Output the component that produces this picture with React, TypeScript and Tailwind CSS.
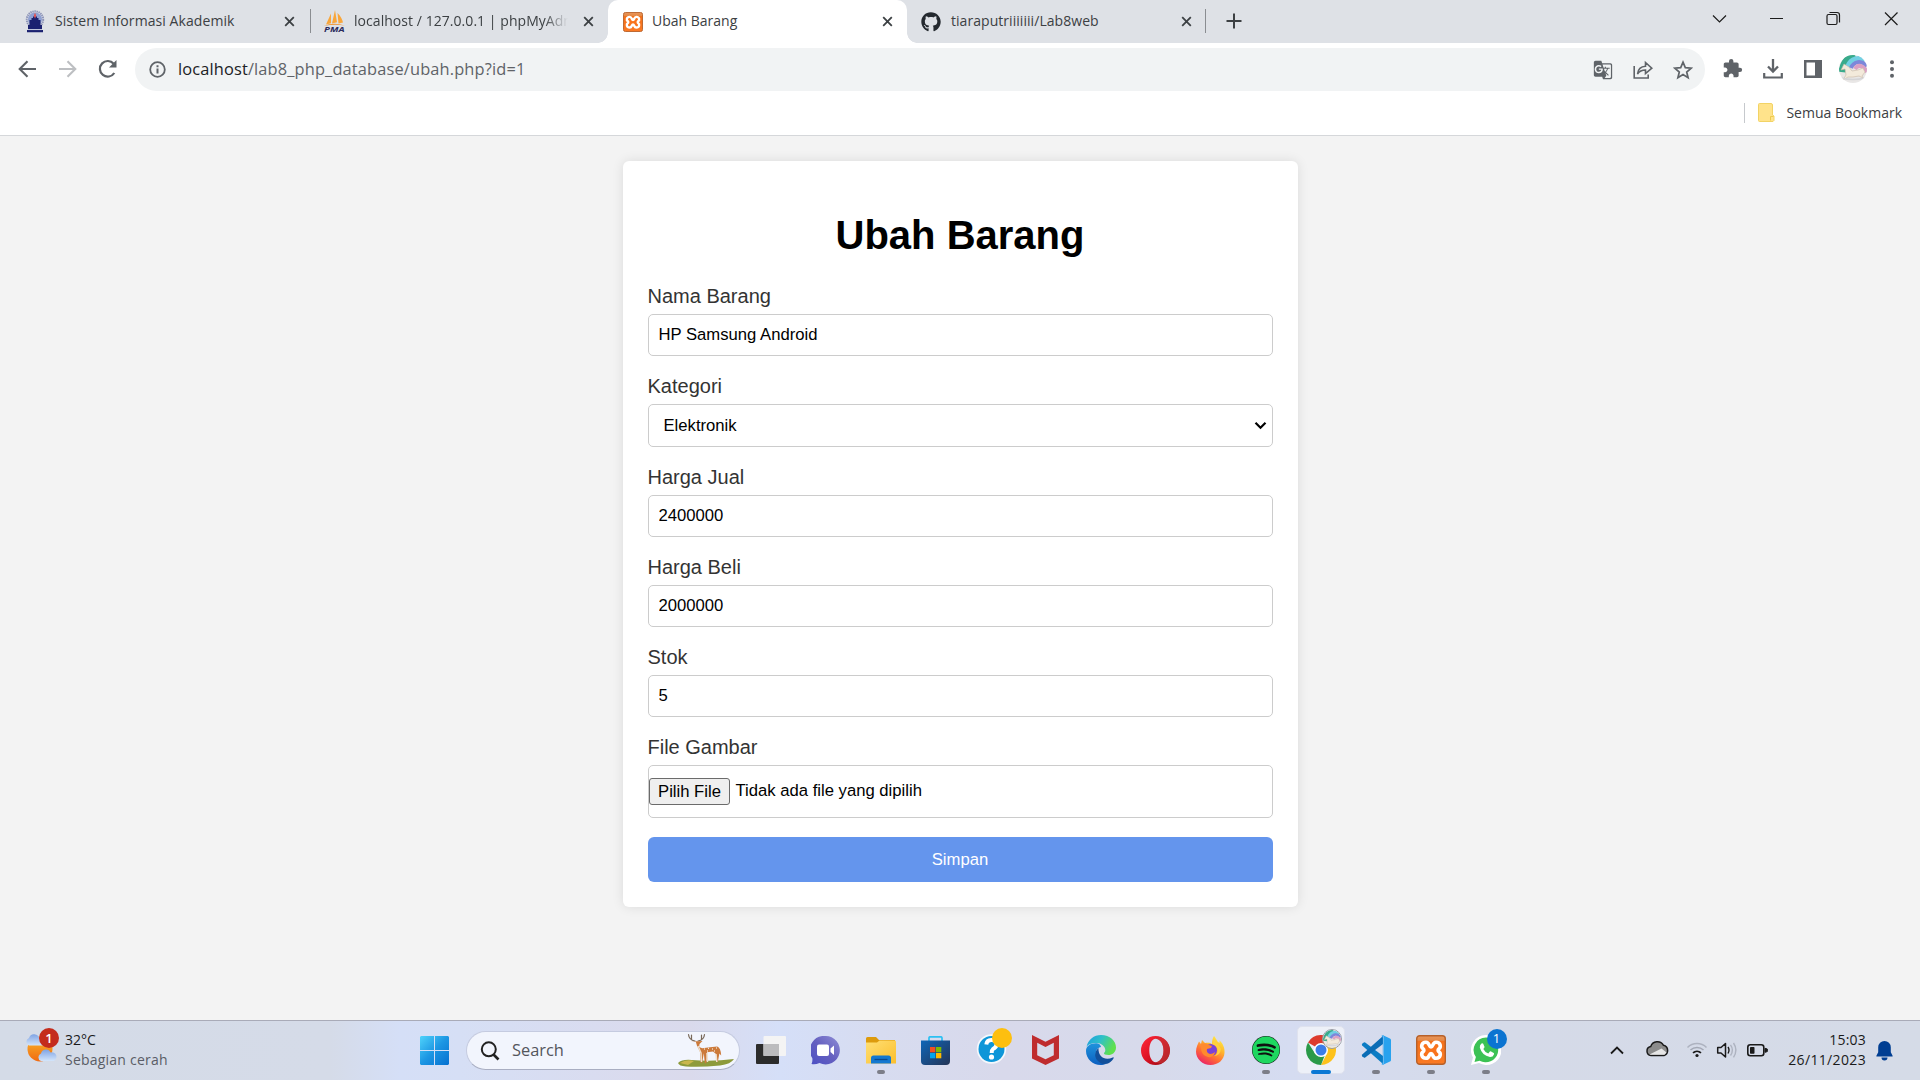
import React from "react";
import { FaGithub, FaSpotify } from "react-icons/fa";
import { MdExtension, MdGTranslate } from "react-icons/md";

const SEGOE = "font-['Open_Sans',sans-serif]";

function CloseX() {
  return (
    <svg width="11" height="11" viewBox="0 0 11 11" className="shrink-0">
      <path d="M1.200 1.200L9.800 9.800M9.800 1.200L1.200 9.800" stroke="#3c4043" strokeWidth="1.800" />
    </svg>
  );
}

function CampusIcon() {
  return (
    <svg width="20" height="23" viewBox="0 0 20 23">
      <circle cx="10" cy="9.500" r="8.200" fill="none" stroke="#8d94b8" strokeWidth="2" strokeDasharray="1.4 .7" />
      <circle cx="10" cy="9.500" r="7" fill="#8fa0d2" />
      <path d="M4.500 10h2V8H8V6.500h4V8h1.500v2h2v5.500h-11z" fill="#1b2170" />
      <path d="M2 20h16v2.300H2zM3 15h14v4.300H3z" fill="#1b2170" />
      <path d="M10 2.500l1.200 3.300-1.200 3-1.200-3z" fill="#e25353" />
      <path d="M3 19.600h14" stroke="#cdd1e6" strokeWidth=".7" />
    </svg>
  );
}

function PmaIcon() {
  return (
    <svg width="21" height="23" viewBox="0 0 21 23" className="shrink-0">
      <path d="M7 3.500L2 14.500l5-1.200zM11 0L8 13.500l5-1.200zM13.500 3c3 3 5 6.500 5.500 9.500l-4.500 1z" fill="#f9a63a" />
      <path d="M0 16Q9 12 21 15.500 10 13.600 0 16z" fill="#f0932b" />
      <text x="0" y="22.400" fontSize="7.600" fontWeight="bold" fontStyle="italic" fontFamily="Open Sans" textLength="20.500" lengthAdjust="spacingAndGlyphs" fill="#2b2b5c">PMA</text>
    </svg>
  );
}

function Xampp({ size }: { size: number }) {
  return (
    <svg width={size} height={size} viewBox="0 0 30 30">
      <defs>
        <linearGradient id="xg" x1="0" y1="0" x2="0" y2="1">
          <stop offset="0" stopColor="#e8955a" />
          <stop offset=".16" stopColor="#e58a48" />
          <stop offset=".2" stopColor="#f3701a" />
          <stop offset="1" stopColor="#fb7a24" />
        </linearGradient>
      </defs>
      <rect x=".7" y=".7" width="28.600" height="28.600" rx="3" fill="url(#xg)" stroke="#b7612a" strokeWidth="1.400" />
      <path d="M15 12C17.300 12 16.300 7.300 20 7.300C24.800 7.300 25.300 12.300 22.700 14C21.900 14.600 21.900 16 22.700 16.600C25.300 18.300 24.800 23.300 20 23.300C16.300 23.300 17.300 18.600 15 18.600C12.700 18.600 13.700 23.300 10 23.300C5.200 23.300 4.700 18.300 7.300 16.600C8.100 16 8.100 14.600 7.300 14C4.700 12.300 5.200 7.300 10 7.300C13.700 7.300 12.700 12 15 12z" fill="#f9731c" stroke="#fff" strokeWidth="3.600" strokeLinejoin="round" />
    </svg>
  );
}

function Unicorn({ size }: { size: number }) {
  return (
    <svg width={size} height={size} viewBox="0 0 28 28">
      <defs><clipPath id="uc"><circle cx="14" cy="14" r="14" /></clipPath></defs>
      <g clipPath="url(#uc)">
        <rect width="28" height="28" fill="#e9e7e6" />
        <path d="M3 17C4 8 8 3 16 0" stroke="#39ab8b" strokeWidth="7" fill="none" />
        <path d="M8 14C10 6 16 1 26 5" stroke="#72d0e3" strokeWidth="5" fill="none" />
        <path d="M12 13C15 6 22 5 28 11" stroke="#7d87da" strokeWidth="4" fill="none" />
        <path d="M16 14C19 9 24 10 28 17" stroke="#dba0c4" strokeWidth="4" fill="none" />
        <path d="M5 9l5 3 3 4 6-1 5-2 2 4-3 4 1 2-4-2-6 1-5 0-5 3 3-5-1-6-4 1z" fill="#f3eadb" stroke="#c9b9a4" strokeWidth=".6" />
        <path d="M2 23q12 3 24 0" stroke="#d4d4d6" strokeWidth="1.500" fill="none" />
      </g>
    </svg>
  );
}

function TabStrip() {
  return (
    <div className="relative flex h-[43px] bg-[#dee1e6] text-[14px] text-[#3c4043]">
      <div className="flex w-[310px] items-center pr-[15px] pl-[25px]">
        <CampusIcon />
        <span className="-mt-[2px] ml-[10px] flex-1 tracking-[0.080px] whitespace-nowrap">Sistem Informasi Akademik</span>
        <CloseX />
      </div>
      <div className="mt-[9px] h-6 w-px bg-[#8a8d91]" />
      <div className="flex w-[297px] items-center pr-[14px] pl-[13px]">
        <PmaIcon />
        <span className="-mt-[2px] ml-[9px] w-[214px] overflow-hidden tracking-[0.050px] whitespace-nowrap [mask-image:linear-gradient(to_right,#000_190px,transparent_214px)]">localhost / 127.0.0.1 | phpMyAdmin</span>
        <span className="flex-1" />
        <CloseX />
      </div>
      <div className="relative flex w-[299px] items-center rounded-t-[10px] bg-white pr-[14px] pl-[15px]">
        <div className="absolute bottom-0 -left-[10px] h-[10px] w-[10px] bg-[radial-gradient(circle_at_0_0,transparent_9.500px,#fff_10px)]" />
        <div className="absolute -right-[10px] bottom-0 h-[10px] w-[10px] bg-[radial-gradient(circle_at_100%_0,transparent_9.500px,#fff_10px)]" />
        <Xampp size={20} />
        <span className="-mt-[2px] ml-[9px] flex-1">Ubah Barang</span>
        <CloseX />
      </div>
      <div className="flex w-[298px] items-center pr-[13px] pl-[14px]">
        <FaGithub size={20} color="#24292f" />
        <span className="-mt-[2px] ml-[10px] flex-1 tracking-[0.050px]">tiaraputriiiiiii/Lab8web</span>
        <CloseX />
      </div>
      <div className="mt-[9px] h-6 w-px bg-[#8a8d91]" />
      <svg width="16" height="16" viewBox="0 0 16 16" className="mt-[13px] ml-[20px]">
        <path d="M8 .5v15M.5 8h15" stroke="#3c4043" strokeWidth="2" />
      </svg>
      <div className="flex-1" />
      <svg width="192" height="24" viewBox="0 0 192 24" className="mt-[6px] mr-[18px] shrink-0" fill="none" stroke="#1c1c1c" strokeWidth="1.200">
        <path d="M3 9.500l6.500 6.500L16 9.500M60 12.500h13" />
        <rect x="117" y="8.500" width="10" height="10" rx="1.500" />
        <path d="M119.500 6.500h7.500a2.500 2.500 0 0 1 2.500 2.500v7.500M175 6.500l12.500 12.500M187.500 6.500l-12.500 12.500" />
      </svg>
    </div>
  );
}

function Toolbar() {
  return (
    <div className="flex h-[48px] items-end">
      <div className="flex h-[43px] w-[135px] items-center pl-[18px]">
        <svg width="19" height="18" viewBox="0 0 19 18" fill="none" stroke="#5f6368" strokeWidth="2.100" className="-mt-[2px]">
          <path d="M18 9H2M9.500 1.200L1.700 9l7.800 7.800" />
        </svg>
        <svg width="19" height="18" viewBox="0 0 19 18" fill="none" stroke="#bdbfc2" strokeWidth="2.100" className="-mt-[2px] ml-[21px]">
          <path d="M1 9h16M9.500 1.200L17.300 9l-7.800 7.800" />
        </svg>
        <svg width="20" height="20" viewBox="0 0 20 20" fill="none" className="-mt-[1px] ml-[21px]">
          <path d="M16.300 14A7.800 7.800 0 1 1 15.700 4.800" stroke="#5f6368" strokeWidth="2.200" />
          <path d="M18.500 1v7.500H11z" fill="#5f6368" />
        </svg>
      </div>
      <div className="flex h-[43px] w-[1570px] items-center rounded-full bg-[#f1f3f4] pl-[14px] text-[16.400px] text-[#5f6368]">
        <svg width="17" height="17" viewBox="0 0 17 17" fill="none" stroke="#5f6368">
          <circle cx="8.500" cy="8.500" r="7.300" strokeWidth="1.800" />
          <path d="M8.500 7.500v5M8.500 4.200v2" strokeWidth="2" />
        </svg>
        <span className="ml-[12px] flex-1 tracking-[0.140px]"><span className="text-[#202124]">localhost</span>/lab8_php_database/ubah.php?id=1</span>
        <MdGTranslate size={20} />
        <svg width="20" height="20" viewBox="0 0 20 20" fill="none" stroke="#5f6368" strokeWidth="1.600" className="ml-[20px]">
          <path d="M1.200 6v12h14v-3.500" />
          <path d="M4.500 14C5 9.500 8 6.500 12.500 6.300V2.500l6.300 5.700-6.300 5.300V10C9 10 6.500 11 4.500 14z" />
        </svg>
        <svg width="20" height="20" viewBox="0 0 20 20" fill="none" stroke="#5f6368" strokeWidth="1.700" className="mr-[12px] ml-[20px]">
          <path d="M10 2.200l2.300 5.400 5.900.5-4.500 3.900 1.400 5.700L10 14.600l-5.100 3.100 1.400-5.700L1.800 8.100l5.900-.5z" />
        </svg>
      </div>
      <div className="flex h-[43px] flex-1 items-center pl-[17px]">
        <MdExtension size={21} color="#5f6368" className="-mt-[2px]" />
        <svg width="20" height="20" viewBox="0 0 20 20" fill="none" stroke="#5f6368" className="-mt-[2px] ml-[20px]">
          <path d="M10 0v12M5 7.500l5 5 5-5" strokeWidth="2.300" />
          <path d="M1.200 14v4.500h17.600V14" strokeWidth="2.200" />
        </svg>
        <svg width="18" height="18" viewBox="0 0 18 18" className="-mt-[2px] ml-[21px]">
          <path d="M0 0h18v18H0zM2.500 2.500v13H11v-13z" fill="#5f6368" fillRule="evenodd" />
        </svg>
        <div className="-mt-[1px] ml-[17px]"><Unicorn size={28} /></div>
        <svg width="4" height="18" viewBox="0 0 4 18" className="-mt-[1px] ml-[23px]" fill="#5f6368">
          <circle cx="2" cy="2.200" r="2" /><circle cx="2" cy="9" r="2" /><circle cx="2" cy="15.800" r="2" />
        </svg>
      </div>
    </div>
  );
}

function Bookmarks() {
  return (
    <div className="flex h-[45px] items-start justify-end border-b border-[#d5d7da] pr-[18px] text-[14px] text-[#3c4043]">
      <div className="mt-[12px] h-5 w-px bg-[#c6c9cd]" />
      <svg width="17" height="19" viewBox="0 0 17 19" className="mt-[12px] ml-[13px]">
        <path d="M1.500.5h11.500a1.500 1.500 0 0 1 1.500 1.500v10l1.500 1v4.500l-1 1H1.500a1 1 0 0 1-1-1V1.500a1 1 0 0 1 1-1z" fill="#ffe38b" stroke="#f2d365" />
        <path d="M12.500 17.500v-4h3" fill="none" stroke="#efca4c" />
      </svg>
      <span className="mt-[11px] ml-[11px]">Semua Bookmark</span>
    </div>
  );
}

const field = "block w-full rounded-[5px] border border-[#ccc] bg-white text-[16.667px] text-black";

function Field({ label, children }: { label: string; children: React.ReactNode }) {
  return (
    <div className="h-[90.250px]">
      <label className="mb-[6px] block h-[24px] text-[20px] leading-[24px] text-[#333]">{label}</label>
      {children}
    </div>
  );
}

function FormCard() {
  return (
    <main className="flex h-[884px] justify-center bg-[#f3f3f3] pt-[25px] font-['Liberation_Sans',Arial,sans-serif]">
      <form className="h-[746px] w-[675px] rounded-[6px] bg-white px-[25px] shadow-[0_0_12px_rgba(0,0,0,0.1)]">
        <h1 className="mt-[51px] mb-[26px] h-[46px] text-center text-[40px] leading-[46px] font-bold text-black">Ubah Barang</h1>
        <Field label="Nama Barang"><input className={field + " h-[42px] px-[10px]"} defaultValue="HP Samsung Android" /></Field>
        <Field label="Kategori">
          <div className={field + " flex h-[43px] items-center justify-between pr-[5px] pl-[15px]"}>
            <span>Elektronik</span>
            <svg width="13" height="9" viewBox="0 0 13 9" fill="none" stroke="#000" strokeWidth="2.200"><path d="M1.500 1.700l5 5 5-5" /></svg>
          </div>
        </Field>
        <Field label="Harga Jual"><input className={field + " h-[42px] px-[10px]"} defaultValue="2400000" /></Field>
        <Field label="Harga Beli"><input className={field + " h-[42px] px-[10px]"} defaultValue="2000000" /></Field>
        <Field label="Stok"><input className={field + " h-[42px] px-[10px]"} defaultValue="5" /></Field>
        <Field label="File Gambar">
          <div className={field + " flex h-[53px] items-start pt-[12px]"}>
            <button type="button" className="h-[27px] w-[81px] rounded-[3px] border border-[#6b6b6b] bg-[#efefef] pl-px leading-[25px] whitespace-nowrap">Pilih File</button>
            <span className="ml-[6px] leading-[25px]">Tidak ada file yang dipilih</span>
          </div>
        </Field>
        <button type="button" className="mt-[11px] block h-[45px] w-full rounded-[6px] bg-[#6495ed] text-[16.667px] text-white">Simpan</button>
      </form>
    </main>
  );
}

function Cell({ children, dot, active }: { children: React.ReactNode; dot?: boolean; active?: boolean }) {
  return (
    <div className="relative flex h-[58px] w-[55px] shrink-0 items-center justify-center">
      {active && <div className="absolute top-[5px] left-[3.500px] h-[48px] w-[48px] rounded-[5px] border border-[#dfe2ee] bg-[#edf0f8]" />}
      <div className="relative">{children}</div>
      {dot && <div className="absolute bottom-[5px] h-[4px] w-[8px] rounded-full bg-[#7c7e88]" />}
      {active && <div className="absolute bottom-[5px] h-[4px] w-[20px] rounded-full bg-[#0b78d4]" />}
    </div>
  );
}

function StartIcon() {
  return (
    <svg width="29" height="29" viewBox="0 0 29 29" className="block">
      <defs><linearGradient id="wg" x1="0" y1="0" x2="1" y2="1"><stop offset="0" stopColor="#4fd3fb" /><stop offset=".5" stopColor="#1c96e3" /><stop offset="1" stopColor="#0570d0" /></linearGradient></defs>
      <path d="M1 0h13v14H0V1zM15 0h13l1 1v13H15zM0 15h14v14H1l-1-1zM15 15h14v13l-1 1H15z" fill="url(#wg)" />
    </svg>
  );
}

function Deer() {
  return (
    <svg width="56" height="34" viewBox="0 0 56 34" className="-mt-px">
      <path d="M0 30Q4 26 14 27q20 2 42-1-3 5-14 6.500-20 2-34 1Q1 33 0 30z" fill="#8d9a3b" />
      <path d="M2 30q6-4 14-2l-6 4z" fill="#c9b64d" />
      <path d="M17 8Q11 7 10.500 1.500M20 8Q26 7 26.500 1.500M13.500 6V2M23.500 6V2" fill="none" stroke="#79695a" strokeWidth="1.200" strokeLinecap="round" />
      <path d="M13 8l4 .3h3.500l4-.3-3 3-.3 3 3 1.300q8-1.300 15-1.800 3.500 1 4 9l-1.800-2-1.600 8.500h-1.300l-.5-8-3-2.500-6 .8-.7 11h-1.500l-1-10-1.600 9.500h-1.500l-.7-11-3-6-1.200-4z" fill="#cc7a3b" />
      <path d="M20 13l3 7 .5 9M29 20l.5 9M38 21l.8 8" stroke="#efdfcc" strokeWidth="1.500" fill="none" />
      <path d="M26 16h1M30 15.300h1M34 16h1M38 15h1M29 18h1M36 18h1" stroke="#fff" strokeWidth="1" />
    </svg>
  );
}

function TaskView() {
  return (
    <svg width="30" height="28" viewBox="0 0 30 28" className="block">
      <rect x="0" y="8" width="23" height="20" rx="1" fill="#2c2c2c" />
      <rect x="7.500" y="0" width="22.500" height="20" rx="1" fill="#f4f4f4" />
      <rect x="7.500" y="8" width="15.500" height="12" fill="#bcbcbe" />
    </svg>
  );
}

function Chat() {
  return (
    <svg width="29" height="29" viewBox="0 0 29 29" className="block">
      <defs><linearGradient id="cg" x1="1" y1="0" x2="0" y2="1"><stop offset="0" stopColor="#8f8ed6" /><stop offset=".5" stopColor="#6560c0" /><stop offset="1" stopColor="#4c50c4" /></linearGradient></defs>
      <path d="M14.500 0a14.200 14.200 0 1 1-6 27Q4 29 .5 28q1.300-2.500.8-6A14.200 14.200 0 0 1 14.500 0z" fill="url(#cg)" />
      <rect x="6" y="8.500" width="12" height="11.500" rx="2" fill="#fff" />
      <path d="M19.500 12.500l3.500-3v9.500l-3.500-3z" fill="#fff" />
    </svg>
  );
}

function Explorer() {
  return (
    <svg width="30" height="27" viewBox="0 0 30 27" className="block">
      <defs><linearGradient id="eg" x1="0" y1="0" x2="1" y2="1"><stop offset="0" stopColor="#ffdf74" /><stop offset="1" stopColor="#fbbf2d" /></linearGradient></defs>
      <path d="M0 1.500Q0 0 1.500 0H10l3 3h16v5H0z" fill="#dd9b0c" />
      <path d="M0 5.500h11l2.500-2H29l1 1V26.500H0z" fill="url(#eg)" />
      <path d="M5 26.500V21q0-2.500 2.500-2.500h15Q25 18.500 25 21v5.500z" fill="#1478d0" />
      <path d="M8.500 22.500h13" stroke="#0b4a90" strokeWidth="1.300" />
    </svg>
  );
}

function Store() {
  return (
    <svg width="29" height="29" viewBox="0 0 29 29" className="block">
      <defs><linearGradient id="sg" x1="0" y1="0" x2="1" y2="1"><stop offset="0" stopColor="#0f66b8" /><stop offset="1" stopColor="#243456" /></linearGradient></defs>
      <path d="M8 5V2q0-1.200 1.200-1.200h10.600Q21 .8 21 2v3" fill="none" stroke="#2cc0f2" strokeWidth="1.700" />
      <path d="M0 4.500h29V25q0 4-4 4H4q-4 0-4-4z" fill="url(#sg)" />
      <path d="M9 11h5.300v5.300H9z" fill="#f25022" /><path d="M15 11h5.300v5.300H15z" fill="#7fba00" />
      <path d="M9 17h5.300v5.300H9z" fill="#00a4ef" /><path d="M15 17h5.300v5.300H15z" fill="#ffb900" />
    </svg>
  );
}

function Help() {
  return (
    <svg width="36" height="38" viewBox="0 0 36 38" className="block">
      <circle cx="15.500" cy="21" r="14.700" fill="#f4f8fc" />
      <circle cx="15.500" cy="21" r="13" fill="#0e96d8" />
      <path d="M10.300 16.500q.7-5 5.700-4.500 5 .7 4.500 5-.5 2.500-3.500 4-1.300 1-1.300 4" fill="none" stroke="#fff" strokeWidth="4" />
      <circle cx="15.500" cy="29" r="2.600" fill="#fff" />
      <circle cx="26" cy="10" r="10" fill="#fdbf0f" />
    </svg>
  );
}

function McAfee() {
  return (
    <svg width="27" height="30" viewBox="0 0 27 30" className="block">
      <path d="M0 0l13.500 6.700L27 0v23.500L13.500 30 0 23.500z" fill="#bf2c2e" />
      <path d="M5.200 7.800l8.300 4.200 8.300-4.200v12.400l-8.300 4-8.300-4z" fill="#d7daea" />
    </svg>
  );
}

function Edge() {
  return (
    <svg width="30" height="30" viewBox="0 0 30 30" className="block">
      <defs>
        <linearGradient id="ea" x1="0" y1="0" x2="1" y2=".4"><stop offset="0" stopColor="#1b9de2" /><stop offset=".5" stopColor="#2fc0c8" /><stop offset="1" stopColor="#5fe04d" /></linearGradient>
        <linearGradient id="eb" x1="0" y1="0" x2="0" y2="1"><stop offset="0" stopColor="#1f93dc" /><stop offset="1" stopColor="#0c5fc0" /></linearGradient>
      </defs>
      <path d="M.5 12C2 4.500 8 0 15 0c9 0 15 6 15 12.500 0 5-4 7.500-7.500 7.500-3 0-5-1-4.500-2 1.500-1.500 1.500-3 1-4.500C18 10 14 8 10 8 5 8 1.500 10 .5 12z" fill="url(#ea)" />
      <path d="M12 8.500C5 7.500 0 11 0 16c0 8 7 14 14.500 14 2 0 4-.3 6-1.200C12 27 9 21 10 16.500c.7-2.500 2.500-4 5-4.500-.3-2-1.500-3-3-3.500z" fill="url(#eb)" />
      <path d="M12.500 13C9 16 8 21 11 25c3.500 4.500 9 5 12 3 2.500-1.500 4-3.500 4.700-5 .2-.7-.3-1-1-.6C20 25.500 12 23 12.500 13z" fill="#12509b" />
    </svg>
  );
}

function Opera() {
  return (
    <svg width="29" height="29" viewBox="0 0 29 29" className="block">
      <defs><linearGradient id="og" x1="0" y1="0" x2="1" y2="1"><stop offset="0" stopColor="#ff2b3c" /><stop offset=".45" stopColor="#e01325" /><stop offset="1" stopColor="#8e0710" /></linearGradient></defs>
      <path d="M14.500 0a14.500 14.500 0 1 1 0 29 14.500 14.500 0 0 1 0-29zm0 2.800c-3.500 0-6.200 5-6.200 11.700s2.700 11.700 6.200 11.700c4.500 0 8-5 8-11.700s-3.500-11.700-8-11.700z" fill="url(#og)" fillRule="evenodd" />
      <path d="M14.500 2.800c2-1.500 6-1.800 9 .4a14.500 14.500 0 0 1 0 22.600c-3 2.200-7 1.900-9 .4 4.500 0 8-5 8-11.700s-3.500-11.700-8-11.700z" fill="#c93b3b" fillOpacity=".6" />
    </svg>
  );
}

function Firefox() {
  return (
    <svg width="29" height="30" viewBox="0 0 29 30" className="block">
      <defs><linearGradient id="fg" x1=".8" y1="0" x2=".2" y2="1"><stop offset="0" stopColor="#fff04a" /><stop offset=".35" stopColor="#ffb62c" /><stop offset=".65" stopColor="#ff6a35" /><stop offset="1" stopColor="#e8186f" /></linearGradient></defs>
      <path d="M18 1c1 1 2.500 3.500 3.500 5.500l2 1.500c0-1 .2-2 0-2.500 3 2.500 5.500 7 5 12.500C28 25 22 30 14.500 30 6.500 30 0 24 0 16.500 0 12 2 9 3 6.500L5 9l1-4 3 3c3-.5 5-.5 7 1 0-3 .5-6 2-8z" fill="url(#fg)" />
      <circle cx="14.800" cy="15.200" r="6.200" fill="#7a42d8" />
      <path d="M5 9q4-2 8 1l3 1-1 2-4 1q-1 4 3 5 3 0 5-2-1 6-7 5-7-2-7-9z" fill="#ff8a2e" />
      <path d="M16 9q6 2 5.500 7-.5 4-3.500 5 6 0 7-7Q22 8 18 5z" fill="#ffd13f" />
    </svg>
  );
}

function Chrome() {
  return (
    <svg width="30" height="30" viewBox="0 0 30 30" className="block">
      <path d="M15 15L2.010 7.500A15 15 0 0 1 28 7.500z" fill="#dd3b2e" />
      <path d="M15 8.200h13.400A15 15 0 0 1 15 30l6-11.500z" fill="#fdc21c" />
      <path d="M2.010 7.500L9 18.500l6 3.300 3.500-.8L15 30A15 15 0 0 1 2.010 7.500z" fill="#2a9a48" />
      <circle cx="15" cy="15" r="7" fill="#fff" /><circle cx="15" cy="15" r="5.500" fill="#3b7de8" />
    </svg>
  );
}

function VSCode() {
  return (
    <svg width="30" height="30" viewBox="0 0 30 30" className="block">
      <path d="M1.200 8.700l1.600-1.300q.7-.5 1.400 0L22 21v8L1.200 10.500q-.8-.9 0-1.800z" fill="#0b7cc4" />
      <path d="M1.200 21.300l1.600 1.300q.7.500 1.400 0L22 9V1L1.200 19.500q-.8.900 0 1.800z" fill="#0a6cb5" />
      <path d="M22 .2l7 3.300q1 .5 1 1.500v20q0 1-1 1.500l-7 3.300q.8-.6.800-2V2.200q0-1.400-.8-2z" fill="#28a2ee" />
      <path d="M20.500.7L22.500 0v30l-2-.8L21.800 27V3z" fill="#28a2ee" />
    </svg>
  );
}

function WhatsApp() {
  return (
    <svg width="30" height="30" viewBox="0 0 30 30" className="block">
      <path d="M15 0a15 15 0 1 1-7 28L0 30l2-7.500A15 15 0 0 1 15 0z" fill="#fff" />
      <path d="M15 2.500a12.400 12.400 0 1 1-6.300 23.200L3.500 27l1.400-5A12.400 12.400 0 0 1 15 2.500z" fill="#3cc254" />
      <path d="M10.500 8.500q1-.7 1.700.2l1.300 3q.2.700-1.200 2.200 1.800 3.500 5 4.500l1.600-1.800q.5-.5 1.200-.1l2.600 1.400q.7.400.2 1.600-1 2.700-4 2.500Q11 20.500 8.800 12.500q-.2-2.500 1.700-4z" fill="#fff" />
    </svg>
  );
}

function Weather() {
  return (
    <svg width="34" height="35" viewBox="0 0 34 35" className="mt-[2px]">
      <defs><linearGradient id="sun" x1="0" y1="0" x2="0" y2="1"><stop offset="0" stopColor="#fbb82b" /><stop offset="1" stopColor="#f06a12" /></linearGradient>
        <linearGradient id="cl" x1="0" y1="0" x2="0" y2="1"><stop offset="0" stopColor="#7ea3e4" /><stop offset="1" stopColor="#d3e5fb" /></linearGradient></defs>
      <circle cx="15" cy="21" r="12.500" fill="url(#sun)" />
      <path d="M4 17.500a4 4 0 0 1 0-7.500 5.500 5.500 0 0 1 10-1l4 8.500z" fill="url(#cl)" />
      <path d="M16 33a4 4 0 0 1 0-7.500 5 5 0 0 1 9.500-1 4 4 0 0 1 3 8.500z" fill="url(#cl)" />
      <circle cx="24" cy="10" r="10" fill="#c42b1c" />
      <text x="24" y="15" textAnchor="middle" fontSize="13" fontWeight="600" fontFamily="Open Sans" fill="#fff">1</text>
    </svg>
  );
}

function Tray() {
  return (
    <svg width="160" height="30" viewBox="0 0 160 30" className="block" fill="none">
      <path d="M2 18.500l6-6 6 6" stroke="#1a1a1a" strokeWidth="1.800" />
      <path d="M42 20.500a4.500 4.500 0 0 1-.3-8.900 7 7 0 0 1 12.800-1.300 5.300 5.300 0 0 1 .5 10.200z" fill="#8c8c8c" stroke="#1a1a1a" strokeWidth="1.500" />
      <path d="M40.500 19.500l12-6 5 4-2 2.300H42z" fill="#e6e6e6" />
      <g stroke="#aeb3c0" strokeWidth="1.500"><path d="M78.500 12.500a13.500 13.500 0 0 1 19 0" /><path d="M81.500 15a9.500 9.500 0 0 1 13 0" stroke="#a3a8b5" /></g>
      <path d="M84 17.800a6 6 0 0 1 8 0" stroke="#1a1a1a" strokeWidth="1.700" /><circle cx="88" cy="20.500" r="1.600" fill="#1a1a1a" />
      <path d="M108.700 12.500h3.300l4.500-4v13.500l-4.500-4h-3.300z" stroke="#1a1a1a" strokeWidth="1.500" strokeLinejoin="round" />
      <path d="M119 12q2 3 0 6.500" stroke="#1a1a1a" strokeWidth="1.400" />
      <path d="M121.500 9.800q3.800 5.200 0 10.700M124.500 8q4.800 7 0 14.300" stroke="#aeb3c0" strokeWidth="1.400" />
      <rect x="138.800" y="9.800" width="16" height="11" rx="2.500" stroke="#1a1a1a" strokeWidth="1.600" />
      <rect x="141" y="12" width="4.500" height="6.800" rx=".7" fill="#1a1a1a" /><path d="M156 13.300l2.300.7v2.600l-2.300.7z" fill="#1a1a1a" stroke="#1a1a1a" />
    </svg>
  );
}

function Taskbar() {
  return (
    <footer className="flex h-[60px] items-start border-t border-[#a9abb8] bg-[linear-gradient(90deg,#d4dbe7_0,#d5dbe8_330px,#d5dff7_400px,#d6dff5_460px,#dadbee_640px,#dadaec_690px,#d5dff8_780px,#d7dcf0_880px,#d8d9eb_1000px,#d7daeb_1150px,#d5dcf1_1290px,#d5dae8_1500px,#d5dbe7_100%)]">
      <div className="flex w-[407px] shrink-0 pt-[5px] pl-[25px]">
        <Weather />
        <div className="ml-[6px] text-[14px] leading-[20px] text-[#1a1a1a]">
          <div className="mt-[4px]">32°C</div>
          <div className="tracking-[0.220px] text-[#5a5d66]">Sebagian cerah</div>
        </div>
      </div>
      <Cell><StartIcon /></Cell>
      <div className="mt-[10px] mr-[3px] ml-[4px] flex h-[39px] w-[274px] shrink-0 items-center rounded-full border border-[#c5cbe0] border-b-[#a9aec2] bg-[#f2f5fd] pr-[5px] pl-[13px]">
        <svg width="20" height="20" viewBox="0 0 20 20" fill="none" stroke="#222" strokeWidth="2"><circle cx="8.800" cy="8.300" r="7" /><path d="M13.500 13.500l5 5" strokeWidth="2.600" /></svg>
        <span className="ml-[12px] flex-1 text-[16.400px] text-[#54565c]">Search</span>
        <Deer />
      </div>
      <Cell><TaskView /></Cell>
      <Cell><Chat /></Cell>
      <Cell dot><Explorer /></Cell>
      <Cell><Store /></Cell>
      <Cell><div className="-mt-[6px] ml-[6px]"><Help /></div></Cell>
      <Cell><McAfee /></Cell>
      <Cell><Edge /></Cell>
      <Cell><Opera /></Cell>
      <Cell><Firefox /></Cell>
      <Cell dot><span className="block rounded-full bg-[#101010]"><FaSpotify size={28} color="#1ed760" className="block" /></span></Cell>
      <Cell active>
        <Chrome />
        <div className="absolute -top-[6px] left-[16px] rounded-full border border-[#9b9da5]"><Unicorn size={18} /></div>
      </Cell>
      <Cell dot><VSCode /></Cell>
      <Cell dot><Xampp size={30} /></Cell>
      <Cell dot>
        <WhatsApp />
        <div className="absolute -top-[6px] left-[16px] flex h-[20px] w-[20px] items-center justify-center rounded-full bg-[#0b74d1] text-[13px] text-white">1</div>
      </Cell>
      <div className="flex-1" />
      <div className="mt-[14px] mr-[10px] shrink-0"><Tray /></div>
      <div className="mt-[9px] w-[87px] shrink-0 text-right text-[14px] leading-[20px] whitespace-nowrap text-[#1a1a1a]">
        <div className="tracking-[0.200px]">15:03</div>
        <div className="tracking-[0.350px]">26/11/2023</div>
      </div>
      <svg width="17" height="20" viewBox="0 0 17 20" className="mt-[20px] mr-[27px] ml-[10px] shrink-0" fill="#003e92">
        <path d="M8.500 0a6.300 6.300 0 0 1 6.300 6.300v5l1.800 3.500v.7H.4v-.7l1.800-3.500v-5A6.300 6.300 0 0 1 8.500 0zM5.500 16.500h6a3 3 0 0 1-6 0z" />
      </svg>
    </footer>
  );
}

export default function App() {
  return (
    <div className={"h-[1080px] w-[1920px] overflow-hidden bg-white " + SEGOE}>
      <TabStrip />
      <Toolbar />
      <Bookmarks />
      <FormCard />
      <Taskbar />
    </div>
  );
}
